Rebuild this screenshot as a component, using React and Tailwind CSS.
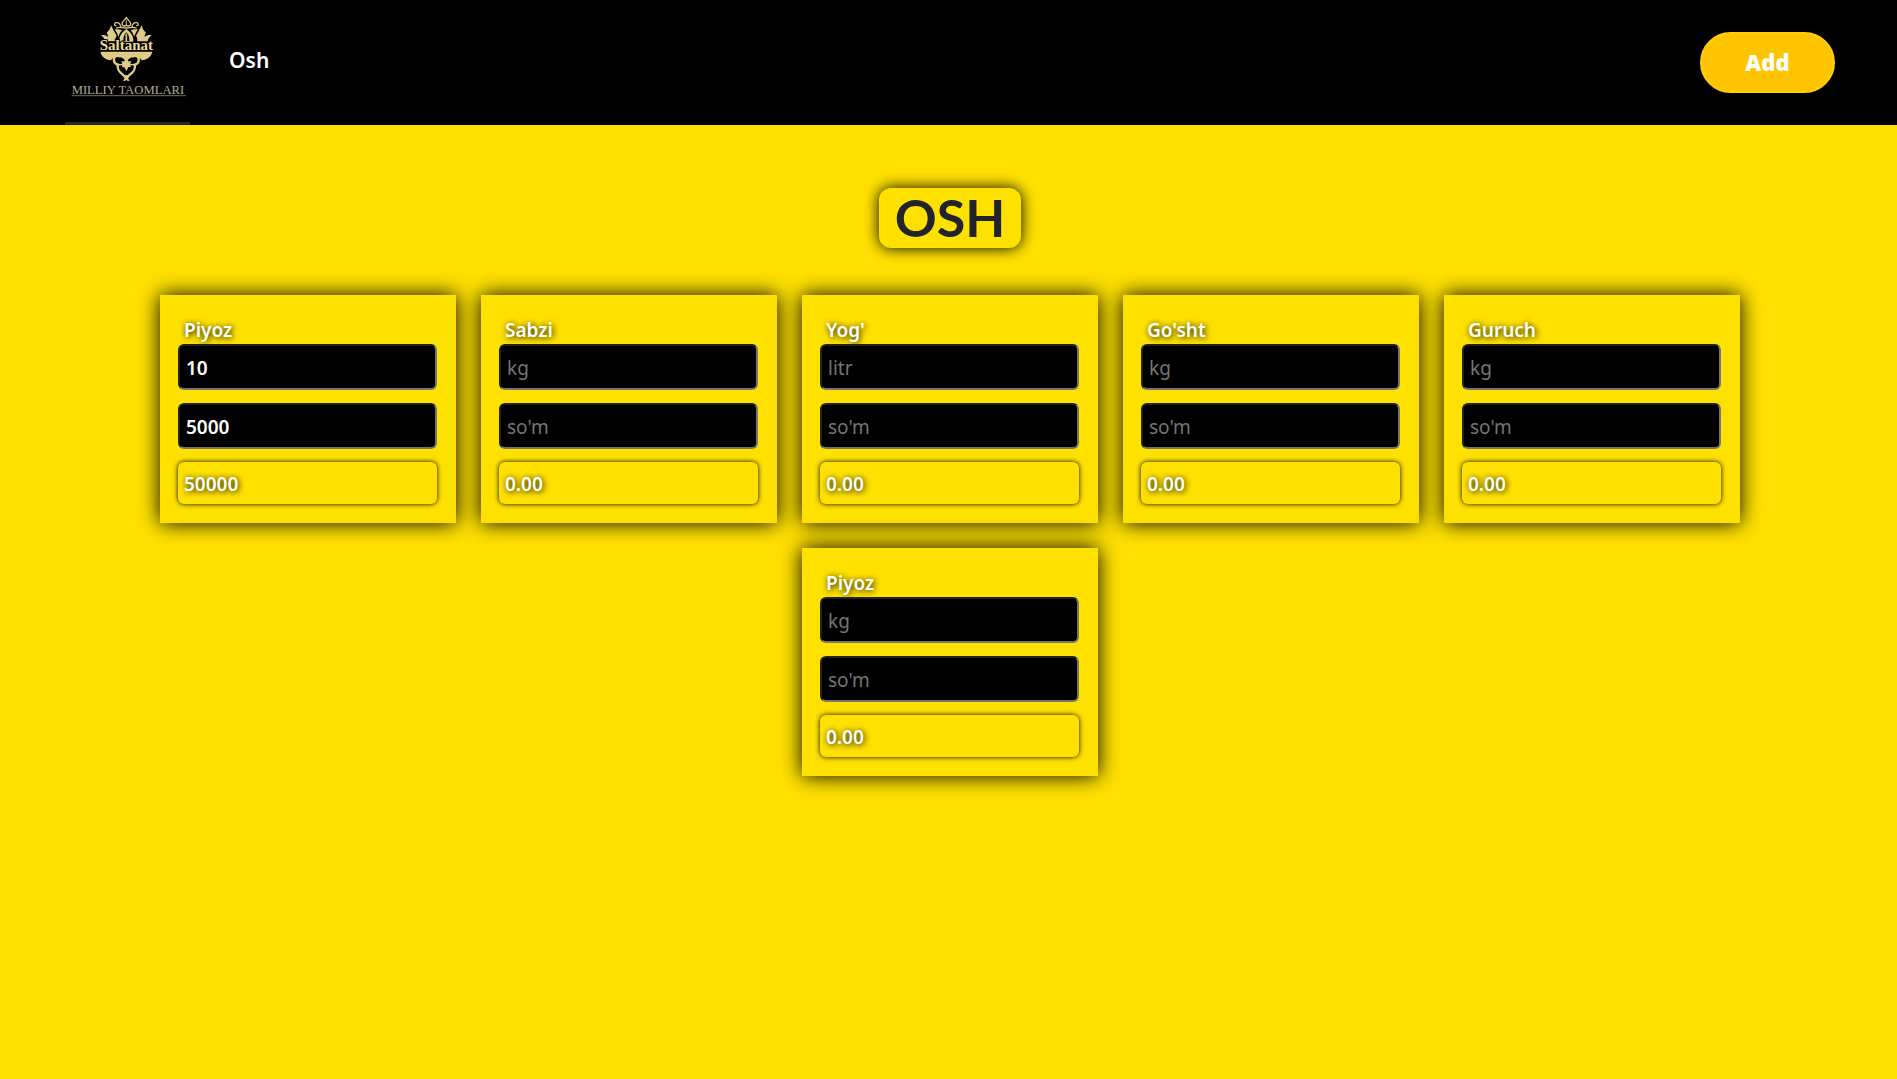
import { useState } from "react";

function Logo() {
  return (
    <svg viewBox="15 0 375 375" className="size-[125px] shrink-0" role="img" aria-label="Saltanat milliy taomlari">
      <g fill="none" stroke="#dfcc86" strokeWidth="5" strokeLinecap="round">
        <path d="M199 53c-4 7-13 11-13 18s7 9 13 5c6 4 13 2 13-5s-9-11-13-18z" strokeWidth="4" />
        <path d="M199 62v14" strokeWidth="3" />
        <path d="M182 79c-2-8-8-12-14-11s-6 10 0 9M216 79c2-8 8-12 14-11s6 10 0 9" strokeWidth="4" />
        <path d="M170 84c10-5 17 0 29 0s19-5 29 0" strokeWidth="4" />
      </g>
      <g fill="#dfcc86">
        <path d="M153 76c-2 10-6 16-13 22 3 4 4 8 4 13-7-6-14-7-21-5 7 5 11 10 12 18h32c-2-6-1-11 3-17-7-11-11-20-17-31z" />
        <path d="M245 76c2 10 6 16 13 22-3 4-4 8-4 13 7-6 14-7 21-5-7 5-11 10-12 18h-32c2-6 1-11-3-17 7-11 11-20 17-31z" />
        <path d="M164 88c8-1 16 0 22 3-5 6-9 12-10 19-4-8-7-15-12-22zM234 88c-8-1-16 0-22 3 5 6 9 12 10 19 4-8 7-15 12-22z" />
        <path d="M199 87c-12 9-22 20-21 38h42c1-18-9-29-21-38z" />
        <path d="M122 155h154v4c-3 11-14 20-31 22-4-7-13-12-23-11-12 1-18 9-23 16-5-7-11-15-23-16-10-1-19 4-23 11-17-2-28-11-31-22z" />
        <path d="M199 174l6 10 9 0-4 8 3 8-8 2-6 12-6-12-8-2 3-8-4-8 9 0z" />
        <path d="M190 230l9-6 9 6-4 5 5 7-6 1-4-4-4 4-6-1 5-7z" />
      </g>
      <g fill="none" stroke="#dfcc86" strokeWidth="7" strokeLinecap="round">
        <path d="M180 169c-12-5-20 2-18 13 1 6 5 10 11 12-1 17 5 20 12 27 6 5 10 9 14 14" />
        <path d="M218 169c12-5 20 2 18 13-1 6-5 10-11 12 1 17-5 20-12 27-6 5-10 9-14 14" />
        <path d="M176 194c8 1 13-1 15-5M222 194c-8 1-13-1-15-5" strokeWidth="5" />
      </g>
      <path d="M199 97c-7 7-9 15-9 26h18c0-11-2-19-9-26z" fill="#000000" />
      <path d="M199 101v24" stroke="#dfcc86" strokeWidth="5" />
      <text x="119" y="151" fill="#ead994" stroke="#000000" strokeWidth="6" paintOrder="stroke" fontSize="45" fontWeight="700" fontFamily="'Liberation Serif', serif">Saltanat</text>
      <text x="35" y="282" fill="#b3ab93" fontSize="38" fontFamily="'Liberation Serif', serif">MILLIY TAOMLARI</text>
      <path d="M35 287h343" stroke="#aaa28a" strokeWidth="2" />
      <path d="M15 370h375" stroke="#29292b" strokeWidth="8" />
    </svg>
  );
}

const fieldClass =
  "block h-[46px] w-full rounded-md border-2 border-[#767676] border-t-[#212121] border-l-[#212121] bg-black px-[6px] pt-[2px] text-[19px] font-semibold text-white outline-none placeholder:font-normal placeholder:text-[#757575]";

const shadowText = "[text-shadow:1px_1px_6px_#000]";

function ProductCard({ id, name, unit, amount: startAmount = "", price: startPrice = "" }) {
  const [amount, setAmount] = useState(startAmount);
  const [price, setPrice] = useState(startPrice);
  const total = amount && price ? String(Number(amount) * Number(price)) : "0.00";

  return (
    <section className="w-[296px] bg-[#ffe100] pt-[22px] pr-[19px] pb-[19px] pl-[18px] shadow-[0_0_20px_#000]">
      <label htmlFor={`${id}-amount`} className={`block px-[6px] text-[19px] leading-[27px] font-semibold text-white ${shadowText}`}>
        {name}
      </label>
      <div className="flex flex-col gap-[13px]">
        <input id={`${id}-amount`} className={fieldClass} placeholder={unit} value={amount} onChange={(e) => setAmount(e.target.value)} />
        <input aria-label={`${name} so'm`} className={fieldClass} placeholder="so'm" value={price} onChange={(e) => setPrice(e.target.value)} />
        <output className={`block h-[42px] rounded-md px-[6px] text-[19px] leading-[44px] font-semibold text-white shadow-[0_0_5px_#000] ${shadowText}`}>
          {total}
        </output>
      </div>
    </section>
  );
}

const products = [
  { id: "piyoz", name: "Piyoz", unit: "kg", amount: "10", price: "5000" },
  { id: "sabzi", name: "Sabzi", unit: "kg" },
  { id: "yog", name: "Yog'", unit: "litr" },
  { id: "gosht", name: "Go'sht", unit: "kg" },
  { id: "guruch", name: "Guruch", unit: "kg" },
  { id: "piyoz-2", name: "Piyoz", unit: "kg" },
];

export default function App() {
  return (
    <div className="min-h-screen bg-[#ffe100] font-['Noto_Sans','Open_Sans',sans-serif]">
      <header className="flex items-center bg-black pr-[62px] pl-[65px]">
        <Logo />
        <nav className="ml-[39px] pb-1">
          <a href="#osh" className="text-[21px] font-semibold text-white">Osh</a>
        </nav>
        <button type="button" className="ml-auto h-[61px] w-[135px] rounded-full border-2 border-[#ffcf00] bg-[#ffc400] text-[22px] font-black text-white">
          Add
        </button>
      </header>
      <main id="osh" className="flex flex-col items-center pt-[63px] pl-[3px]">
        <h1 className="rounded-xl px-4 pb-[2px] font-[Lato,sans-serif] text-[52px] leading-[58px] font-bold text-[#212529] shadow-[0_0_15px_#000]">OSH</h1>
        <div className="mt-[47px] flex max-w-[1600px] flex-wrap justify-center gap-[25px]">
          {products.map((product) => (
            <ProductCard key={product.id} {...product} />
          ))}
        </div>
      </main>
    </div>
  );
}
